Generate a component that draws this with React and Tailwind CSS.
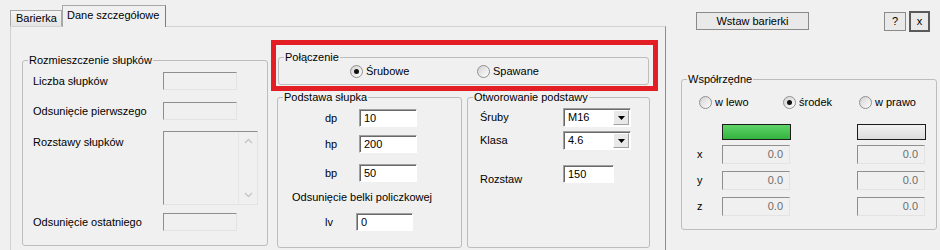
import React from "react";

const sunkenWhite =
  "bg-white border border-[#a0a0a0] border-b-white border-r-white shadow-[inset_1px_1px_0_#696969]";
const sunkenGray =
  "bg-[#f0f0f0] border border-[#8e8e8e] border-b-[#e3e3e3] border-r-[#e3e3e3]";

const Radio = ({ checked }) => (
  <span className="w-[13px] h-[13px] shrink-0 rounded-full border border-[#8f8f8f] bg-linear-to-br from-[#d2d2d2] to-white flex items-center justify-center">
    {checked && <span className="w-[5px] h-[5px] rounded-full bg-[#111]" />}
  </span>
);

const Group = ({ title, className, children }) => (
  <fieldset className={`border border-[#bdbdbd] rounded-[3px] ${className}`}>
    <legend className="ml-[5px] px-[1px] leading-[12px]">{title}</legend>
    {children}
  </fieldset>
);

const Select = ({ value }) => (
  <div className={`w-[68px] h-[19px] flex items-center ${sunkenWhite}`}>
    <span className="flex-1 pl-[4px]">{value}</span>
    <span className="w-[16px] h-[15px] mr-[1px] flex items-center justify-center bg-[#e8e8e8] border border-white border-b-[#a0a0a0] border-r-[#a0a0a0]">
      <svg width="7" height="4" viewBox="0 0 7 4">
        <polygon points="0,0 7,0 3.5,4" fill="#000" />
      </svg>
    </span>
  </div>
);

const Chevron = ({ up }) => (
  <svg width="9" height="6" viewBox="0 0 9 6">
    <path
      d={up ? "M1 5 L4.5 1.5 L8 5" : "M1 1 L4.5 4.5 L8 1"}
      fill="none"
      stroke="#c6c6c6"
      strokeWidth="1.4"
    />
  </svg>
);

const CoordRow = ({ label }) => (
  <div className="flex items-center h-[19px] pl-[15px]">
    <span className="w-[25px]">{label}</span>
    <div className={`w-[68px] h-[19px] flex items-center justify-end pr-[6px] text-[#6d6d6d] ${sunkenGray}`}>
      0.0
    </div>
    <div className={`ml-[67px] w-[68px] h-[19px] flex items-center justify-end pr-[6px] text-[#6d6d6d] ${sunkenGray}`}>
      0.0
    </div>
  </div>
);

export default function App() {
  return (
    <div className="w-[940px] h-[250px] overflow-hidden bg-[#f0f0f0] text-black text-[11px] font-['Liberation_Sans',Arial,sans-serif] flex items-start">
      {/* tab control */}
      <div className="ml-[10px] w-[656px] flex flex-col">
        <div className="mt-[5px] h-[21px] flex items-end">
          <div className="w-[52px] h-[16px] pl-[5px] flex items-center border border-b-0 border-[#a8a8a8] bg-linear-to-b from-[#f4f4f4] to-[#e4e4e4]">
            Barierka
          </div>
          <div className="relative z-10 -mb-px w-[104px] h-[22px] pl-[4px] pb-[2px] flex items-center border border-b-0 border-[#a8a8a8] border-r-[#7d7d7d] bg-[#f0f0f0]">
            Dane szczegółowe
          </div>
        </div>
        <div className="h-[224px] border border-b-0 border-[#d2d2d2] border-r-[#8c8c8c] flex items-start">
          {/* Rozmieszczenie słupków */}
          <Group title="Rozmieszczenie słupków" className="ml-[11px] mt-[27px] w-[246px] h-[192px]">
            <div className="pl-[10px] pt-[6px] flex flex-col">
              <div className="flex items-center h-[18px]">
                <span className="w-[130px]">Liczba słupków</span>
                <div className={`w-[74px] h-[18px] ${sunkenGray}`} />
              </div>
              <div className="flex items-center h-[18px] mt-[12px]">
                <span className="w-[130px]">Odsunięcie pierwszego</span>
                <div className={`w-[74px] h-[18px] ${sunkenGray}`} />
              </div>
              <div className="flex items-start mt-[11px]">
                <span className="w-[130px] mt-[3px]">Rozstawy słupków</span>
                <div className={`w-[95px] h-[74px] flex justify-end ${sunkenGray}`}>
                  <div className="w-[19px] h-full border-l border-[#e6e6e6] flex flex-col justify-between items-center py-[6px]">
                    <Chevron up />
                    <Chevron />
                  </div>
                </div>
              </div>
              <div className="flex items-center h-[18px] mt-[8px]">
                <span className="w-[130px]">Odsunięcie ostatniego</span>
                <div className={`w-[74px] h-[18px] ${sunkenGray}`} />
              </div>
            </div>
          </Group>

          {/* right part of the tab */}
          <div className="ml-[3px] mt-[13px] flex flex-col">
            <div className="w-[387px] h-[51px] border-[5px] border-[#e31e24] pl-[2px] pt-[6px]">
              <Group title="Połączenie" className="w-[371px] h-[34px]">
                <div className="mt-[1px] h-[14px] pl-[71px] flex items-center">
                  <div className="w-[127px] flex items-center gap-[3px]">
                    <Radio checked />
                    <span>Śrubowe</span>
                  </div>
                  <div className="flex items-center gap-[3px]">
                    <Radio />
                    <span>Spawane</span>
                  </div>
                </div>
              </Group>
            </div>

            <div className="ml-[6px] flex items-start gap-[5px]">
              <Group title="Podstawa słupka" className="w-[185px] h-[157px]">
                <div className="pt-[6px] flex flex-col">
                  <div className="pl-[47px] flex items-center h-[18px]">
                    <span className="w-[34px]">dp</span>
                    <div className={`w-[58px] h-[18px] pl-[4px] flex items-center ${sunkenWhite}`}>10</div>
                  </div>
                  <div className="pl-[47px] mt-[8px] flex items-center h-[18px]">
                    <span className="w-[34px]">hp</span>
                    <div className={`w-[58px] h-[18px] pl-[4px] flex items-center ${sunkenWhite}`}>200</div>
                  </div>
                  <div className="pl-[47px] mt-[11px] flex items-center h-[18px]">
                    <span className="w-[34px]">bp</span>
                    <div className={`w-[58px] h-[18px] pl-[4px] flex items-center ${sunkenWhite}`}>50</div>
                  </div>
                  <div className="pl-[14px] mt-[9px] leading-[13px]">Odsunięcie belki policzkowej</div>
                  <div className="pl-[47px] mt-[9px] flex items-center h-[18px]">
                    <span className="w-[31px]">lv</span>
                    <div className={`w-[57px] h-[18px] pl-[4px] flex items-center ${sunkenWhite}`}>0</div>
                  </div>
                </div>
              </Group>

              <Group title="Otworowanie podstawy" className="w-[183px] h-[157px]">
                <div className="pt-[5px] pl-[12px] flex flex-col">
                  <div className="flex items-center h-[19px]">
                    <span className="w-[83px]">Śruby</span>
                    <Select value="M16" />
                  </div>
                  <div className="mt-[4px] flex items-center h-[19px]">
                    <span className="w-[83px]">Klasa</span>
                    <Select value="4.6" />
                  </div>
                  <div className="mt-[15px] flex items-start h-[18px]">
                    <span className="w-[83px] pt-[6px]">Rozstaw</span>
                    <div className={`w-[51px] h-[18px] pl-[4px] flex items-center ${sunkenWhite}`}>150</div>
                  </div>
                </div>
              </Group>
            </div>
          </div>
        </div>
      </div>

      {/* right column */}
      <div className="flex flex-col">
        <div className="ml-[30px] mt-[11px] flex items-start">
          <button className="mt-[1px] w-[113px] h-[18px] flex items-center justify-center bg-[#e9e9e9] border border-[#8a8a8a]">
            Wstaw barierki
          </button>
          <button className="ml-[75px] mt-[1px] w-[22px] h-[19px] flex items-center justify-center bg-[#e9e9e9] border border-[#8a8a8a]">
            ?
          </button>
          <button className="ml-[3px] w-[21px] h-[21px] flex items-center justify-center bg-[#e9e9e9] border-2 border-[#5a5a5a]">
            x
          </button>
        </div>

        <Group title="Współrzędne" className="ml-[15px] mt-[41px] w-[256px] h-[157px]">
          <div className="mt-[10px] h-[14px] pl-[17px] flex items-center">
            <div className="w-[84px] flex items-center gap-[3px]">
              <Radio />
              <span>w lewo</span>
            </div>
            <div className="w-[76px] flex items-center gap-[3px]">
              <Radio checked />
              <span>środek</span>
            </div>
            <div className="flex items-center gap-[3px]">
              <Radio />
              <span>w prawo</span>
            </div>
          </div>
          <div className="mt-[15px] pl-[40px] flex items-center">
            <div className="w-[69px] h-[16px] border border-[#1c1c1c] bg-linear-to-b from-[#5fd468] to-[#32b33f]" />
            <div className="ml-[66px] w-[69px] h-[16px] border border-[#1c1c1c] bg-linear-to-b from-[#f2f2f2] to-[#dcdcdc]" />
          </div>
          <div className="mt-[5px] flex flex-col gap-[7px]">
            <CoordRow label="x" />
            <CoordRow label="y" />
            <CoordRow label="z" />
          </div>
        </Group>
      </div>
    </div>
  );
}
